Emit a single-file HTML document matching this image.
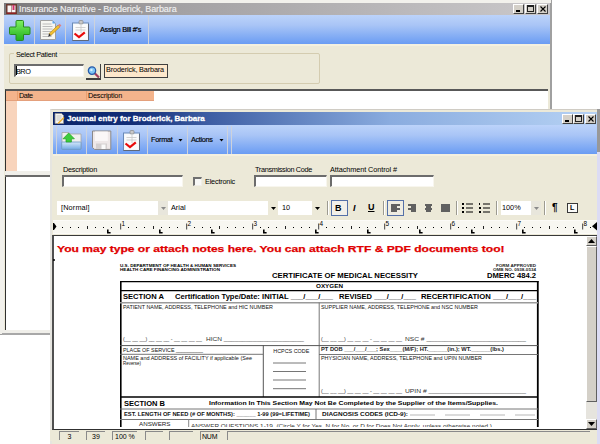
<!DOCTYPE html>
<html><head><meta charset="utf-8">
<style>
*{margin:0;padding:0;box-sizing:border-box}
html,body{width:600px;height:444px;overflow:hidden;background:#fff;font-family:"Liberation Sans",sans-serif;font-size:9px;color:#000}
.a{position:absolute}
.tb{background:linear-gradient(#bcd3fa,#a9c5f6 35%,#6a9cf3)}
.sep{position:absolute;width:1px;background:#cdd2dc}
.inp{position:absolute;background:#fff;border-top:2px solid #6c6c6c;border-left:2px solid #6c6c6c;border-bottom:1px solid #f8f6ee;border-right:1px solid #f8f6ee}
.cbtn{position:absolute;width:11px;height:10px;background:#d4d0c8;border-top:1px solid #fff;border-left:1px solid #fff;border-right:1px solid #404040;border-bottom:1px solid #404040}
.lbl{position:absolute;font-size:7.3px;line-height:9px;white-space:nowrap}
.fsep{position:absolute;top:201px;width:2px;height:14px;border-left:1px solid #9c9a90;border-right:1px solid #fff}
</style></head><body>

<!-- ================= BACKGROUND WINDOW ================= -->
<div class="a" style="left:0;top:0;width:552px;height:335px;background:#ece9d8;border-right:2px solid #a0a0a0;border-bottom:1px solid #a0a0a0"></div>
<div class="a" style="left:0;top:0;width:4px;height:334px;background:#f2f1ec"></div>
<div class="a" style="left:0;top:0;width:551px;height:3px;background:#f2f1ec"></div>
<!-- title bar -->
<div class="a" style="left:4px;top:3px;width:546px;height:12px;background:linear-gradient(90deg,#7a787a,#a2a0a2 30%,#cac8ca)"></div>
<svg class="a" style="left:6px;top:4px" width="11" height="10" viewBox="0 0 11 10">
<rect x="0" y="0" width="11" height="10" fill="#6a3a30"/>
<rect x="1.5" y="1.5" width="3.8" height="7" fill="#f8f4f4"/><rect x="5.7" y="1.5" width="3.8" height="7" fill="#f8f4f4"/>
<rect x="6.5" y="1" width="2" height="5" fill="#d0306a"/>
<rect x="1" y="8.5" width="9" height="1.5" fill="#902020"/>
</svg>
<div class="a" style="left:19px;top:3px;font-size:9px;line-height:12px;letter-spacing:-0.1px;color:#f0f0f0;white-space:nowrap;-webkit-text-stroke:0.15px #f0f0f0">Insurance Narrative - Broderick, Barbara</div>
<div class="cbtn" style="left:513px;top:4px"><div class="a" style="left:2px;top:5px;width:4px;height:2px;background:#000"></div></div>
<div class="cbtn" style="left:525px;top:4px"><div class="a" style="left:1px;top:0px;width:7px;height:7px;border:1px solid #202020;border-top-width:2px"></div></div>
<div class="cbtn" style="left:537px;top:4px"><svg class="a" style="left:1px;top:0px" width="8" height="8"><path d="M1.5 1.5L6.5 6.5M6.5 1.5L1.5 6.5" stroke="#000" stroke-width="1.1"/></svg></div>
<!-- toolbar -->
<div class="a tb" style="left:4px;top:15px;width:546px;height:29px"></div>
<div class="sep" style="left:34px;top:15px;height:29px"></div>
<div class="sep" style="left:65px;top:15px;height:29px"></div>
<div class="sep" style="left:94px;top:15px;height:29px"></div>
<div class="sep" style="left:148px;top:15px;height:29px"></div>
<!-- green plus -->
<svg class="a" style="left:8px;top:18.5px" width="23" height="22" viewBox="0 0 23 22">
<defs><linearGradient id="gp" x1="0" y1="0" x2="0" y2="1"><stop offset="0" stop-color="#7ef060"/><stop offset="1" stop-color="#20b020"/></linearGradient></defs>
<path d="M9 1.5h5.5a1 1 0 0 1 1 1v5.5h5.5a1 1 0 0 1 1 1v5.5a1 1 0 0 1-1 1h-5.5v5a1 1 0 0 1-1 1h-5.5a1 1 0 0 1-1-1v-5h-5.5a1 1 0 0 1-1-1v-5.5a1 1 0 0 1 1-1h5.5v-5.5a1 1 0 0 1 1-1z" fill="url(#gp)" stroke="#2a8a20" stroke-width="1"/>
</svg>
<!-- notepad -->
<svg class="a" style="left:39px;top:19px" width="23" height="22" viewBox="0 0 23 22">
<path d="M1.5 1.5h12l3 3v16h-15z" fill="#f6f6f2" stroke="#a0a0a0"/>
<path d="M13.5 1.5v3h3z" fill="#5aa8f0"/>
<path d="M3.5 5h9M3.5 7.5h10M3.5 10h10M3.5 12.5h10M3.5 15h9M3.5 17.5h9" stroke="#b4b4b4" stroke-width="0.9"/>
<path d="M10.1 14.56L11.9 16.44L20.9 7.94L19.1 6.06z" fill="#f2c030" stroke="#a07010" stroke-width="0.5"/>
<path d="M10.1 14.56L11.9 16.44L9.2 17.7z" fill="#303030"/>
<path d="M19.1 6.06L20.9 7.94L22.4 6.54L20.6 4.66z" fill="#e08080"/>
</svg>
<!-- clipboard -->
<svg class="a" style="left:71px;top:20px" width="19" height="22" viewBox="0 0 19 22">
<rect x="1.5" y="3" width="16" height="17.5" fill="#f4f8fc" stroke="#6a8ab8" stroke-width="1"/>
<path d="M17.5 4v16.5h-16" fill="none" stroke="#606878" stroke-width="1"/>
<rect x="3" y="4.5" width="13" height="14.5" fill="#fbfbfb"/>
<rect x="8" y="0.5" width="4" height="3.5" rx="1" fill="#c8c8c8" stroke="#8a8a8a" stroke-width="0.7"/>
<path d="M4.5 7.5h10M4.5 10h10M10 5v8" stroke="#c8c8c8" stroke-width="0.8"/>
<path d="M3.5 13.5l4.5 3.6 5.8-4.8" fill="none" stroke="#e80c0c" stroke-width="2.2"/>
</svg>
<div class="a" style="left:100px;top:25px;font-size:7.3px;line-height:10px;letter-spacing:-0.25px;white-space:nowrap;-webkit-text-stroke:0.2px #000">Assign Bill #'s</div>
<div class="a" style="left:4px;top:44px;width:546px;height:2px;background:#f4f0e0"></div>

<!-- select patient group -->
<div class="a" style="left:9px;top:53px;width:311px;height:31px;border:1px solid #d4ccb0;border-radius:2px"></div>
<div class="a" style="left:14px;top:50px;padding:0 2px;background:#ece9d8;font-size:7.3px;line-height:10px;letter-spacing:-0.29px">Select Patient</div>
<div class="inp" style="left:14px;top:64px;width:70px;height:13px"></div>
<div class="a" style="left:16px;top:67px;font-size:7.3px;line-height:9px;letter-spacing:-0.5px">BRO</div>
<div class="a" style="left:16px;top:66px;width:1px;height:9px;background:#000"></div>
<!-- search button -->
<div class="a" style="left:86px;top:64px;width:15px;height:16px;border-right:1px solid #404040;border-bottom:2px solid #404040"></div>
<svg class="a" style="left:86px;top:64px" width="15" height="15" viewBox="0 0 15 15">
<path d="M8.5 9l4.5 4.5" stroke="#a04060" stroke-width="2.2"/>
<circle cx="6" cy="6.6" r="3.7" fill="#7cc4f6" stroke="#2458a8" stroke-width="1.2"/>
<circle cx="5.4" cy="6" r="1.2" fill="#d8f0ff"/>
</svg>
<div class="a" style="left:104px;top:64px;width:64px;height:14px;background:#fde8cc;border:1px solid #404040"></div>
<div class="a" style="left:106px;top:65px;font-size:7.3px;line-height:10px;letter-spacing:-0.16px;white-space:nowrap">Broderick, Barbara</div>

<!-- list -->
<div class="a" style="left:5px;top:89px;width:543px;height:241px;background:#fff;border-top:2px solid #585858;border-left:1px solid #303030"></div>
<div class="a" style="left:6px;top:91px;width:11px;height:80px;background:#f8d4bc"></div>
<div class="a" style="left:6px;top:91px;width:148px;height:10px;background:#f4b48c;border-bottom:1px solid #e4a07c"></div>
<div class="a" style="left:17px;top:91px;width:1px;height:10px;background:#e8a070"></div>
<div class="a" style="left:86px;top:91px;width:1px;height:10px;background:#e8a070"></div>
<div class="a" style="left:19px;top:91px;font-size:7.3px;line-height:10px;letter-spacing:-0.45px">Date</div>
<div class="a" style="left:88px;top:91px;font-size:7.3px;line-height:10px;letter-spacing:-0.23px">Description</div>
<div class="a" style="left:5px;top:171px;width:543px;height:4px;background:#f0efea"></div>
<div class="a" style="left:5px;top:175px;width:543px;height:2px;background:#6a6a6a"></div>
<div class="a" style="left:0px;top:330px;width:550px;height:3px;background:#f0efea"></div>
<div class="a" style="left:2px;top:333px;width:549px;height:2px;background:#a8a8a8"></div>

<!-- ================= JOURNAL WINDOW ================= -->
<div class="a" style="left:50px;top:109px;width:547px;height:335px;background:#ece9d8;border-left:2px solid #e6e5e0;border-top:1px solid #d0ccc4"></div>
<div class="a" style="left:597px;top:152px;width:3px;height:292px;background:#dcdcf4"></div>
<div class="a" style="left:597px;top:109px;width:3px;height:43px;background:#989898"></div>
<!-- title -->
<div class="a" style="left:53px;top:112px;width:544px;height:13px;background:linear-gradient(90deg,#0a246a 0%,#122e78 15%,#3c5ca2 28%,#8aacdf 62%,#b6d2f4 100%)"></div>
<svg class="a" style="left:54px;top:113px" width="11" height="11" viewBox="0 0 11 11">
<path d="M1 .5h6.5l2 2v8h-8.5z" fill="#f4f4f0" stroke="#909090" stroke-width=".8"/>
<path d="M2.5 3h5M2.5 5h5M2.5 7h4" stroke="#b0b0b0" stroke-width=".7"/>
<path d="M4 9.5l5.5-5.5 1 1-5.5 5.5-1.5.5z" fill="#f0b030"/>
</svg>
<div class="a" style="left:67px;top:112px;font-size:8px;line-height:13px;font-weight:bold;color:#fff;white-space:nowrap;letter-spacing:0px;-webkit-text-stroke:0.3px #fff">Journal entry for Broderick, Barbara</div>
<div class="cbtn" style="left:562px;top:114px"><div class="a" style="left:2px;top:5px;width:4px;height:2px;background:#000"></div></div>
<div class="cbtn" style="left:573px;top:114px"><div class="a" style="left:1px;top:0px;width:7px;height:7px;border:1px solid #202020;border-top-width:2px"></div></div>
<div class="cbtn" style="left:585px;top:114px"><svg class="a" style="left:1px;top:0px" width="8" height="8"><path d="M1.5 1.5L6.5 6.5M6.5 1.5L1.5 6.5" stroke="#000" stroke-width="1.1"/></svg></div>
<!-- toolbar -->
<div class="a tb" style="left:53px;top:125px;width:544px;height:29px"></div>
<div class="sep" style="left:56px;top:126px;height:28px"></div>
<div class="sep" style="left:86px;top:126px;height:28px"></div>
<div class="sep" style="left:117px;top:126px;height:28px"></div>
<div class="sep" style="left:147px;top:126px;height:28px"></div>
<div class="sep" style="left:187px;top:126px;height:28px"></div>
<div class="sep" style="left:227px;top:126px;height:28px"></div>
<div class="sep" style="left:231px;top:126px;height:28px"></div>
<!-- open folder w/ green arrow -->
<svg class="a" style="left:60px;top:130px" width="23" height="21" viewBox="0 0 23 21">
<defs><linearGradient id="fb" x1="0" y1="0" x2="0" y2="1"><stop offset="0" stop-color="#d4e8fa"/><stop offset="1" stop-color="#74aae4"/></linearGradient></defs>
<path d="M2 2.5h7l1.5 1.5h10.5v15h-19z" fill="#f0f0ee" stroke="#a4a4a4" stroke-width=".8"/>
<rect x="1.7" y="12" width="19.3" height="7.4" rx=".8" fill="url(#fb)" stroke="#6a98c8" stroke-width=".8"/>
<path d="M8.7 3L14.4 8.8H11.4V12H6V8.8H3z" fill="#3ccc3c" stroke="#22a022" stroke-width=".7"/>
</svg>
<!-- floppy -->
<svg class="a" style="left:91px;top:130px" width="22" height="21" viewBox="0 0 22 21">
<path d="M1.5 1h18.3v18.4h-16.3l-2-2z" fill="#eee8e8" stroke="#8a8888"/>
<rect x="4" y="1.5" width="12.8" height="9.5" fill="#faf7f7"/>
<rect x="5" y="13.5" width="11" height="5.5" fill="#d4d0d0"/>
<rect x="10.5" y="14.5" width="4" height="4.5" fill="#fafafa"/>
</svg>
<!-- clipboard 2 -->
<svg class="a" style="left:122px;top:130px" width="19" height="22" viewBox="0 0 19 22">
<rect x="1.5" y="3" width="16" height="17.5" fill="#f4f8fc" stroke="#6a8ab8" stroke-width="1"/>
<path d="M17.5 4v16.5h-16" fill="none" stroke="#606878" stroke-width="1"/>
<rect x="3" y="4.5" width="13" height="14.5" fill="#fbfbfb"/>
<rect x="8" y="0.5" width="4" height="3.5" rx="1" fill="#c8c8c8" stroke="#8a8a8a" stroke-width="0.7"/>
<path d="M4.5 7.5h10M4.5 10h10M10 5v8" stroke="#c8c8c8" stroke-width="0.8"/>
<path d="M3.5 13.5l4.5 3.6 5.8-4.8" fill="none" stroke="#e80c0c" stroke-width="2.2"/>
</svg>
<div class="a" style="left:151px;top:135px;font-size:7.3px;line-height:10px;letter-spacing:-0.25px;white-space:nowrap;-webkit-text-stroke:0.15px #000">Format</div>
<svg class="a" style="left:178px;top:139px" width="5" height="3"><path d="M0.5 0h4l-2 2.5z" fill="#000"/></svg>
<div class="a" style="left:191px;top:135px;font-size:7.3px;line-height:10px;letter-spacing:-0.33px;white-space:nowrap;-webkit-text-stroke:0.15px #000">Actions</div>
<svg class="a" style="left:219px;top:139px" width="5" height="3"><path d="M0.5 0h4l-2 2.5z" fill="#000"/></svg>
<div class="a" style="left:53px;top:154px;width:544px;height:2px;background:#f4f0e0"></div>

<!-- form -->
<div class="lbl" style="left:63px;top:165px;letter-spacing:-0.23px">Description</div>
<div class="inp" style="left:62px;top:175px;width:121px;height:12px"></div>
<div class="a" style="left:193px;top:177px;width:9px;height:9px;background:#f8f8f6;border:1px solid #f0eee8;border-left:2px solid #707070;border-top:2px solid #707070"></div>
<div class="lbl" style="left:205px;top:177px;letter-spacing:-0.2px">Electronic</div>
<div class="lbl" style="left:255px;top:165px;letter-spacing:-0.33px">Transmission Code</div>
<div class="inp" style="left:254px;top:175px;width:73px;height:12px"></div>
<div class="lbl" style="left:330px;top:165px;letter-spacing:-0.08px">Attachment Control #</div>
<div class="inp" style="left:330px;top:175px;width:104px;height:12px"></div>

<!-- format bar -->
<div class="a" style="left:57px;top:201px;width:101px;height:14px;background:#fff"></div>
<div class="a" style="left:158px;top:201px;width:10px;height:14px;background:#e8e6dc"></div>
<svg class="a" style="left:161px;top:207px" width="5" height="3"><path d="M0 0h5l-2.5 3z" fill="#8a8a8a"/></svg>
<div class="lbl" style="left:61px;top:203px;letter-spacing:0.15px">[Normal]</div>
<div class="a" style="left:168px;top:201px;width:100px;height:14px;background:#fff"></div>
<div class="a" style="left:268px;top:201px;width:10px;height:14px;background:#ece9d8"></div>
<svg class="a" style="left:271px;top:207px" width="5" height="3"><path d="M0 0h5l-2.5 3z" fill="#000"/></svg>
<div class="lbl" style="left:171px;top:203px">Arial</div>
<div class="a" style="left:278px;top:201px;width:34px;height:14px;background:#fff"></div>
<div class="a" style="left:312px;top:201px;width:11px;height:14px;background:#ece9d8"></div>
<svg class="a" style="left:315px;top:207px" width="5" height="3"><path d="M0 0h5l-2.5 3z" fill="#000"/></svg>
<div class="lbl" style="left:282px;top:203px">10</div>
<div class="fsep" style="left:327px"></div>
<div class="a" style="left:331px;top:200px;width:17px;height:16px;border:1px solid #5470a8;background:#f2f0ea"></div>
<div class="a" style="left:335px;top:203px;font-size:9px;line-height:10px;font-weight:bold">B</div>
<div class="a" style="left:353px;top:203px;font-size:9px;line-height:10px;font-style:italic;font-weight:bold">I</div>
<div class="a" style="left:368px;top:202px;font-size:9px;line-height:10px;font-weight:bold;text-decoration:underline">U</div>
<div class="fsep" style="left:383px"></div>
<div class="a" style="left:387px;top:200px;width:17px;height:16px;border:1px solid #5470a8;background:#eeece2"></div>
<svg class="a" style="left:389px;top:203px" width="64" height="10" viewBox="0 0 64 10">
<g fill="#606060">
<rect x="2" y="1" width="9" height="2"/><rect x="2" y="3" width="6" height="2"/><rect x="2" y="5" width="9" height="2"/><rect x="2" y="7" width="6" height="2"/>
<rect x="19" y="1" width="8" height="2"/><rect x="22" y="3" width="5" height="2"/><rect x="19" y="5" width="8" height="2"/><rect x="22" y="7" width="5" height="2"/>
<rect x="36" y="1" width="7" height="2"/><rect x="37" y="3" width="5" height="2"/><rect x="36" y="5" width="7" height="2"/><rect x="37" y="7" width="5" height="2"/>
<rect x="52" y="1" width="9" height="8"/>
</g></svg>
<div class="fsep" style="left:456px"></div>
<svg class="a" style="left:462px;top:202px" width="30" height="11" viewBox="0 0 30 11">
<g fill="#000"><rect x="0" y="1" width="2" height="2"/><rect x="0" y="5" width="2" height="2"/><rect x="0" y="9" width="2" height="2"/>
<rect x="4" y="1.5" width="7" height="1"/><rect x="4" y="5.5" width="7" height="1"/><rect x="4" y="9.5" width="7" height="1"/>
<rect x="17" y="1" width="1" height="2"/><rect x="17" y="5" width="2" height="2"/><rect x="17" y="9" width="2" height="2"/>
<rect x="21" y="1.5" width="7" height="1"/><rect x="21" y="5.5" width="7" height="1"/><rect x="21" y="9.5" width="7" height="1"/></g></svg>
<div class="fsep" style="left:496px"></div>
<div class="a" style="left:501px;top:201px;width:30px;height:14px;background:#fff"></div>
<div class="a" style="left:531px;top:201px;width:10px;height:14px;background:#e8e6dc"></div>
<svg class="a" style="left:534px;top:207px" width="5" height="3"><path d="M0 0h5l-2.5 3z" fill="#8a8a8a"/></svg>
<div class="lbl" style="left:502px;top:203px">100%</div>
<div class="fsep" style="left:544px"></div>
<div class="a" style="left:552px;top:202px;font-size:10px;line-height:11px;font-weight:bold">&para;</div>
<div class="a" style="left:567px;top:203px;width:11px;height:10px;border:1.5px solid #383838;background:#fafaf8"></div>
<div class="a" style="left:570px;top:205px;font-size:7px;line-height:6px;font-weight:bold">L</div>

<!-- ruler -->
<div class="a" style="left:53px;top:220px;width:544px;height:14px;background:#f8f7f1;border-top:1px solid #fcfbf8;border-bottom:1px solid #fcfbf8"></div>
<svg class="a" style="left:53px;top:220px;font-family:'Liberation Sans',sans-serif" width="544" height="15" viewBox="53 220 544 15" id="ruler">
<path d="M53 223h1l2.5 3.5-2.5 3.5h-1z" fill="#000"/>
<rect x="62" y="227" width="1" height="1" fill="#000"/>
<rect x="70" y="227" width="1" height="1" fill="#000"/>
<rect x="78" y="227" width="1" height="1" fill="#000"/>
<rect x="87" y="226" width="1" height="3" fill="#202020"/>
<rect x="95" y="227" width="1" height="1" fill="#000"/>
<rect x="103" y="227" width="1" height="1" fill="#000"/>
<rect x="111" y="227" width="1" height="1" fill="#000"/>
<rect x="120" y="223.5" width="1.2" height="6" fill="#606060"/>
<text x="121.5" y="226" font-size="6.4" fill="#000">1</text>
<rect x="128" y="227" width="1" height="1" fill="#000"/>
<rect x="136" y="227" width="1" height="1" fill="#000"/>
<rect x="144" y="227" width="1" height="1" fill="#000"/>
<rect x="153" y="226" width="1" height="3" fill="#202020"/>
<rect x="161" y="227" width="1" height="1" fill="#000"/>
<rect x="169" y="227" width="1" height="1" fill="#000"/>
<rect x="177" y="227" width="1" height="1" fill="#000"/>
<rect x="186" y="223.5" width="1.2" height="6" fill="#606060"/>
<text x="187.5" y="226" font-size="6.4" fill="#000">2</text>
<rect x="194" y="227" width="1" height="1" fill="#000"/>
<rect x="202" y="227" width="1" height="1" fill="#000"/>
<rect x="210" y="227" width="1" height="1" fill="#000"/>
<rect x="219" y="226" width="1" height="3" fill="#202020"/>
<rect x="227" y="227" width="1" height="1" fill="#000"/>
<rect x="235" y="227" width="1" height="1" fill="#000"/>
<rect x="243" y="227" width="1" height="1" fill="#000"/>
<rect x="252" y="223.5" width="1.2" height="6" fill="#606060"/>
<text x="253.5" y="226" font-size="6.4" fill="#000">3</text>
<rect x="260" y="227" width="1" height="1" fill="#000"/>
<rect x="268" y="227" width="1" height="1" fill="#000"/>
<rect x="276" y="227" width="1" height="1" fill="#000"/>
<rect x="285" y="226" width="1" height="3" fill="#202020"/>
<rect x="293" y="227" width="1" height="1" fill="#000"/>
<rect x="301" y="227" width="1" height="1" fill="#000"/>
<rect x="309" y="227" width="1" height="1" fill="#000"/>
<rect x="318" y="223.5" width="1.2" height="6" fill="#606060"/>
<text x="319.5" y="226" font-size="6.4" fill="#000">4</text>
<rect x="326" y="227" width="1" height="1" fill="#000"/>
<rect x="334" y="227" width="1" height="1" fill="#000"/>
<rect x="342" y="227" width="1" height="1" fill="#000"/>
<rect x="351" y="226" width="1" height="3" fill="#202020"/>
<rect x="359" y="227" width="1" height="1" fill="#000"/>
<rect x="367" y="227" width="1" height="1" fill="#000"/>
<rect x="375" y="227" width="1" height="1" fill="#000"/>
<rect x="384" y="223.5" width="1.2" height="6" fill="#606060"/>
<text x="385.5" y="226" font-size="6.4" fill="#000">5</text>
<rect x="392" y="227" width="1" height="1" fill="#000"/>
<rect x="400" y="227" width="1" height="1" fill="#000"/>
<rect x="408" y="227" width="1" height="1" fill="#000"/>
<rect x="417" y="226" width="1" height="3" fill="#202020"/>
<rect x="425" y="227" width="1" height="1" fill="#000"/>
<rect x="433" y="227" width="1" height="1" fill="#000"/>
<rect x="441" y="227" width="1" height="1" fill="#000"/>
<rect x="450" y="223.5" width="1.2" height="6" fill="#606060"/>
<text x="451.5" y="226" font-size="6.4" fill="#000">6</text>
<rect x="458" y="227" width="1" height="1" fill="#000"/>
<rect x="466" y="227" width="1" height="1" fill="#000"/>
<rect x="474" y="227" width="1" height="1" fill="#000"/>
<rect x="483" y="226" width="1" height="3" fill="#202020"/>
<rect x="491" y="227" width="1" height="1" fill="#000"/>
<rect x="499" y="227" width="1" height="1" fill="#000"/>
<rect x="507" y="227" width="1" height="1" fill="#000"/>
<rect x="516" y="223.5" width="1.2" height="6" fill="#606060"/>
<text x="517.5" y="226" font-size="6.4" fill="#000">7</text>
<rect x="524" y="227" width="1" height="1" fill="#000"/>
<rect x="532" y="227" width="1" height="1" fill="#000"/>
<rect x="540" y="227" width="1" height="1" fill="#000"/>
<rect x="549" y="226" width="1" height="3" fill="#202020"/>
<rect x="557" y="227" width="1" height="1" fill="#000"/>
<rect x="565" y="227" width="1" height="1" fill="#000"/>
<rect x="573" y="227" width="1" height="1" fill="#000"/>
<rect x="582" y="223.5" width="1.2" height="6" fill="#606060"/>
<text x="583.5" y="226" font-size="6.4" fill="#000">8</text>
<rect x="590" y="227" width="1" height="1" fill="#000"/>
<path d="M107 229.5h1.6v2.6h2v1.5h-3.6z" fill="#000"/>
<path d="M159 229.5h1.6v2.6h2v1.5h-3.6z" fill="#000"/>
<path d="M211 229.5h1.6v2.6h2v1.5h-3.6z" fill="#000"/>
<path d="M263 229.5h1.6v2.6h2v1.5h-3.6z" fill="#000"/>
<path d="M315 229.5h1.6v2.6h2v1.5h-3.6z" fill="#000"/>
<path d="M367 229.5h1.6v2.6h2v1.5h-3.6z" fill="#000"/>
<path d="M419 229.5h1.6v2.6h2v1.5h-3.6z" fill="#000"/>
<path d="M471 229.5h1.6v2.6h2v1.5h-3.6z" fill="#000"/>
<path d="M522 229.5h1.6v2.6h2v1.5h-3.6z" fill="#000"/>
<path d="M574 229.5h1.6v2.6h2v1.5h-3.6z" fill="#000"/>
<path d="M597 222v8.5l-5-4.25z" fill="#000"/>
</svg>

<!-- editor -->
<div class="a" style="left:52px;top:235px;width:545px;height:195px;background:#fff;border-top:1px solid #383838;border-left:2px solid #505050;border-bottom:1px solid #303030"></div>
<div class="a" style="left:57px;top:242.5px;font-size:9.6px;line-height:12px;font-weight:bold;color:#e00000;-webkit-text-stroke:0.25px #e00000;white-space:nowrap;transform-origin:0 0;transform:scaleX(1.257)">You may type or attach notes here. You can attach RTF &amp; PDF documents too!</div>

<svg class="a" style="left:53px;top:236px;font-family:'Liberation Sans',sans-serif" width="533" height="190.5" viewBox="53 236 533 190.5" id="form">
<text x="120" y="266.8" font-size="4.2" font-weight="bold" fill="#000" textLength="116" lengthAdjust="spacingAndGlyphs">U.S. DEPARTMENT OF HEALTH &amp; HUMAN SERVICES</text>
<text x="120" y="271.2" font-size="4.2" font-weight="bold" fill="#000" textLength="100" lengthAdjust="spacingAndGlyphs">HEALTH CARE FINANCING ADMINISTRATION</text>
<text x="272" y="278.3" font-size="7" font-weight="bold" fill="#000" textLength="146" lengthAdjust="spacingAndGlyphs">CERTIFICATE OF MEDICAL NECESSITY</text>
<text x="496" y="266.6" font-size="3.8" font-weight="bold" fill="#222" textLength="40" lengthAdjust="spacingAndGlyphs">FORM APPROVED</text>
<text x="493" y="270.6" font-size="3.8" font-weight="bold" fill="#222" textLength="43" lengthAdjust="spacingAndGlyphs">OMB NO. 0938-0534</text>
<text x="487" y="278.3" font-size="7" font-weight="bold" fill="#000" textLength="49" lengthAdjust="spacingAndGlyphs">DMERC 484.2</text>
<line x1="120" y1="281.6" x2="538.5" y2="281.6" stroke="#000" stroke-width="1.4"/>
<line x1="120.8" y1="281" x2="120.8" y2="429" stroke="#000" stroke-width="1.6"/>
<line x1="537.8" y1="281" x2="537.8" y2="429" stroke="#000" stroke-width="1.8"/>
<text x="316" y="287.9" font-size="5.2" font-weight="bold" fill="#000" textLength="27" lengthAdjust="spacingAndGlyphs">OXYGEN</text>
<line x1="120" y1="290.6" x2="538" y2="290.6" stroke="#000" stroke-width="1.2"/>
<text x="123" y="299.3" font-size="7" font-weight="bold" fill="#000" textLength="41" lengthAdjust="spacingAndGlyphs">SECTION A</text>
<text x="175" y="299.3" font-size="6.6" font-weight="bold" fill="#000" textLength="158" lengthAdjust="spacingAndGlyphs">Certification Type/Date: INITIAL ___/___/___</text>
<text x="339" y="299.3" font-size="6.6" font-weight="bold" fill="#000" textLength="77" lengthAdjust="spacingAndGlyphs">REVISED ___/___/___</text>
<text x="421" y="299.3" font-size="6.6" font-weight="bold" fill="#000" textLength="115" lengthAdjust="spacingAndGlyphs">RECERTIFICATION ___/___/___</text>
<line x1="120" y1="302.8" x2="538" y2="302.8" stroke="#9a9a9a" stroke-width="1.5"/>
<text x="123" y="308.7" font-size="5.5" fill="#111" textLength="150" lengthAdjust="spacingAndGlyphs">PATIENT NAME, ADDRESS, TELEPHONE and HIC NUMBER</text>
<text x="321" y="308.7" font-size="5.5" fill="#111" textLength="157" lengthAdjust="spacingAndGlyphs">SUPPLIER NAME, ADDRESS, TELEPHONE and NSC NUMBER</text>
<line x1="319.2" y1="302.5" x2="319.2" y2="397" stroke="#777" stroke-width="1"/>
<text x="123" y="341" font-size="5.2" fill="#333" textLength="79" lengthAdjust="spacingAndGlyphs">(__ __ __) __ __ __ - __ __ __ __</text>
<text x="206" y="341" font-size="5.2" fill="#333" textLength="98" lengthAdjust="spacingAndGlyphs">HICN ______________________</text>
<text x="321" y="341" font-size="5.2" fill="#333" textLength="81" lengthAdjust="spacingAndGlyphs">(__ __ __) __ __ __ - __ __ __ __</text>
<text x="405" y="341" font-size="5.2" fill="#333" textLength="121" lengthAdjust="spacingAndGlyphs">NSC # ___________________________</text>
<line x1="120" y1="345.6" x2="538" y2="345.6" stroke="#555" stroke-width="1"/>
<text x="123" y="352.4" font-size="5.2" fill="#111" textLength="80" lengthAdjust="spacingAndGlyphs">PLACE OF SERVICE _________</text>
<text x="273.3" y="352.6" font-size="5.5" fill="#111" textLength="36" lengthAdjust="spacingAndGlyphs">HCPCS CODE</text>
<line x1="263.3" y1="345" x2="263.3" y2="397" stroke="#555" stroke-width="1"/>
<text x="321" y="350.7" font-size="4.6" font-weight="bold" fill="#222" textLength="183" lengthAdjust="spacingAndGlyphs">PT DOB ___/___/___;  Sex____(M/F);  HT.______(in.);  WT.______(lbs.)</text>
<line x1="120" y1="354.3" x2="263" y2="354.3" stroke="#666" stroke-width="0.9"/>
<line x1="319" y1="354.5" x2="538" y2="354.5" stroke="#666" stroke-width="0.9"/>
<text x="123" y="359.5" font-size="5.2" fill="#111" textLength="129" lengthAdjust="spacingAndGlyphs">NAME and ADDRESS of FACILITY if applicable (See</text>
<text x="123" y="364.5" font-size="5.2" fill="#111" textLength="18" lengthAdjust="spacingAndGlyphs">Reverse)</text>
<line x1="273" y1="363" x2="306" y2="363" stroke="#666" stroke-width="0.9"/>
<line x1="273" y1="371.5" x2="306" y2="371.5" stroke="#666" stroke-width="0.9"/>
<line x1="273" y1="380" x2="306" y2="380" stroke="#666" stroke-width="0.9"/>
<line x1="273" y1="388.7" x2="306" y2="388.7" stroke="#666" stroke-width="0.9"/>
<text x="321" y="360.4" font-size="5.5" fill="#111" textLength="161" lengthAdjust="spacingAndGlyphs">PHYSICIAN NAME, ADDRESS, TELEPHONE and UPIN NUMBER</text>
<text x="321" y="393" font-size="5.2" fill="#333" textLength="81" lengthAdjust="spacingAndGlyphs">(__ __ __) __ __ __ - __ __ __ __</text>
<text x="405" y="393" font-size="5.2" fill="#333" textLength="121" lengthAdjust="spacingAndGlyphs">UPIN # __________________________</text>
<line x1="120" y1="397" x2="538" y2="397" stroke="#000" stroke-width="1.6"/>
<text x="124" y="405.6" font-size="6.8" font-weight="bold" fill="#000" textLength="41" lengthAdjust="spacingAndGlyphs">SECTION B</text>
<text x="209" y="405.2" font-size="5.4" font-weight="bold" fill="#000" textLength="289" lengthAdjust="spacingAndGlyphs">Information In This Section May Not Be Completed by the Supplier of the Items/Supplies.</text>
<line x1="120" y1="409" x2="538" y2="409" stroke="#777" stroke-width="1"/>
<text x="124" y="415.5" font-size="4.8" font-weight="bold" fill="#111" textLength="186" lengthAdjust="spacingAndGlyphs">EST. LENGTH OF NEED (# OF MONTHS): ______  1-99 (99=LIFETIME)</text>
<line x1="316" y1="409" x2="316" y2="419.5" stroke="#666" stroke-width="0.9"/>
<text x="322" y="415.5" font-size="4.8" font-weight="bold" fill="#111" textLength="86" lengthAdjust="spacingAndGlyphs">DIAGNOSIS CODES (ICD-9):</text>
<line x1="410" y1="415" x2="435" y2="415" stroke="#999" stroke-width="0.7"/>
<line x1="445" y1="415" x2="470" y2="415" stroke="#999" stroke-width="0.7"/>
<line x1="480" y1="415" x2="505" y2="415" stroke="#999" stroke-width="0.7"/>
<line x1="515" y1="415" x2="535" y2="415" stroke="#999" stroke-width="0.7"/>
<line x1="120" y1="419.5" x2="538" y2="419.5" stroke="#777" stroke-width="1"/>
<text x="139" y="426.2" font-size="6" fill="#222" textLength="31.5" lengthAdjust="spacingAndGlyphs">ANSWERS</text>
<line x1="188.7" y1="419.5" x2="188.7" y2="427" stroke="#888" stroke-width="1"/>
<text x="191" y="428.2" font-size="5.2" fill="#333" textLength="301" lengthAdjust="spacingAndGlyphs">ANSWER QUESTIONS 1-19. (Circle Y for Yes, N for No, or D for Does Not Apply, unless otherwise noted.)</text>
</svg>

<div class="a" style="left:53px;top:259px;width:2px;height:2px;background:#000;border-radius:1px"></div>
<!-- scrollbar -->
<div class="a" style="left:586px;top:236px;width:11px;height:193px;background:#e6e4de"></div>
<div class="a" style="left:586px;top:236px;width:11px;height:10px;background:#d4d0c8;border-top:1px solid #fff;border-left:1px solid #fff;border-right:1px solid #606060;border-bottom:1px solid #606060"></div>
<svg class="a" style="left:588px;top:239px" width="7" height="4"><path d="M0 4h7l-3.5-4z" fill="#000"/></svg>
<div class="a" style="left:586px;top:246px;width:11px;height:156px;background:#d4d0c8;border-top:1px solid #fff;border-left:1px solid #fff;border-right:1px solid #606060;border-bottom:1px solid #606060"></div>
<div class="a" style="left:586px;top:419px;width:11px;height:10px;background:#d4d0c8;border-top:1px solid #fff;border-left:1px solid #fff;border-right:1px solid #606060;border-bottom:1px solid #606060"></div>
<svg class="a" style="left:588px;top:422px" width="7" height="4"><path d="M0 0h7l-3.5 4z" fill="#000"/></svg>

<!-- status bar -->
<div class="a" style="left:50px;top:430px;width:547px;height:11px;background:#ece9d8"></div>
<div class="a" style="left:59px;top:431px;width:20px;height:9px;border-top:1px solid #8a8a8a;border-left:1px solid #8a8a8a;font-size:7px;line-height:9px;text-align:center">3</div>
<div class="a" style="left:86px;top:431px;width:19px;height:9px;border-top:1px solid #8a8a8a;border-left:1px solid #8a8a8a;font-size:7px;line-height:9px;text-align:center">39</div>
<div class="a" style="left:112px;top:431px;width:25px;height:9px;border-top:1px solid #8a8a8a;border-left:1px solid #8a8a8a;font-size:7px;line-height:9px;padding-left:2px;white-space:nowrap">100 %</div>
<div class="a" style="left:145px;top:431px;width:18px;height:9px;border-top:1px solid #8a8a8a;border-left:1px solid #8a8a8a"></div>
<div class="a" style="left:169px;top:431px;width:24px;height:9px;border-top:1px solid #8a8a8a;border-left:1px solid #8a8a8a"></div>
<div class="a" style="left:200px;top:431px;width:20px;height:9px;border-top:1px solid #8a8a8a;border-left:1px solid #8a8a8a;font-size:7px;line-height:9px;padding-left:1px;letter-spacing:-0.2px">NUM</div>
<div class="a" style="left:227px;top:431px;width:363px;height:9px;border-top:1px solid #8a8a8a;border-left:1px solid #8a8a8a"></div>
</body></html>
